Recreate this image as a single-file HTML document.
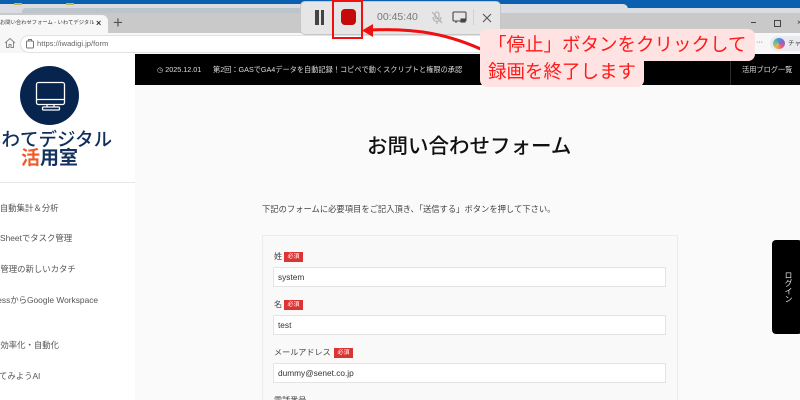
<!DOCTYPE html>
<html lang="ja"><head><meta charset="utf-8"><style>
html,body{margin:0;padding:0;overflow:hidden;width:800px;height:400px}
body{position:relative;background:#fafafa;font-family:"Liberation Sans","Noto Sans CJK JP",sans-serif;color:#333}
.a{position:absolute;white-space:nowrap}
.nav{font-size:8.4px;color:#555;line-height:12px}
.inp{position:absolute;left:273px;width:391px;height:18px;background:#fff;border:1px solid #e4e4e4;font-size:8.3px;line-height:18px;text-indent:4px;color:#333}
.lb{font-size:8.1px;color:#444;line-height:12px}
.rq{position:absolute;width:19px;height:10px;background:#dd3333;color:#fff;font-size:6px;line-height:10px;text-align:center}
</style></head><body>
<div class="a" style="left:0;top:0;width:800px;height:24px;background:#0a5fae"></div>
<div class="a" style="left:0;top:8px;width:800px;height:5px;background:#d9dde2"></div>
<div class="a" style="left:0;top:4px;width:628px;height:10px;background:#d9dde2;border-radius:0 5px 0 0"></div>
<div class="a" style="left:14px;top:3px;width:8px;height:2px;background:#c9b64a"></div>
<div class="a" style="left:66px;top:3px;width:8px;height:2px;background:#c9b64a"></div>
<div class="a" style="left:22px;top:8px;width:280px;height:6px;background:#bcc4cc;border-radius:4px 0 0 0"></div>
<div class="a" style="left:0;top:13px;width:800px;height:20px;background:#c9c9c9"></div>
<div class="a" style="left:0;top:33px;width:800px;height:20px;background:#f7f7f7"></div>
<div class="a" style="left:0;top:15px;width:108px;height:18px;background:#f7f7f7;border-radius:0 6px 0 0"></div>
<div class="a" style="left:0;top:18px;width:94px;overflow:hidden;font-size:5.3px;line-height:11px;color:#333">お問い合わせフォーム - いわてデジタル活用室</div>
<div class="a" style="left:96px;top:17px;font-size:9px;line-height:12px;color:#333;font-weight:700">×</div>
<div class="a" style="left:113px;top:13px;font-size:17px;line-height:19px;color:#555">+</div>
<svg class="a" style="left:3px;top:37px" width="14" height="12" viewBox="0 0 14 12" fill="none" stroke="#888" stroke-width="1"><path d="M2 6 7 1.500 12 6M3.500 5V10.500H6V7.500H8V10.500H10.500V5"/></svg>
<div class="a" style="left:20px;top:35px;width:490px;height:16px;background:#fff;border:1px solid #e2e2e2;border-radius:9px"></div>
<svg class="a" style="left:25px;top:38px" width="10" height="11" viewBox="0 0 10 11" fill="none" stroke="#777" stroke-width="1"><rect x="1.500" y="3" width="7" height="7" rx="1"/><path d="M3.500 3V1.500H6.500V3"/></svg>
<div class="a" style="left:37px;top:38px;font-size:7.6px;line-height:11px;color:#666">https://iwadigi.jp/form</div>
<div class="a" style="left:770px;top:36px;width:30px;height:15px;background:#e9eaee;border-radius:8px 0 0 8px"></div>
<div class="a" style="left:773px;top:38px;width:12px;height:11px;border-radius:50%;background:conic-gradient(#4a90e2,#9b59d0,#e8607a,#f2b33d,#5fc2a0,#4a90e2)"></div>
<div class="a" style="left:788px;top:39px;font-size:6.500px;line-height:9px;color:#444">チャット</div>
<div class="a" style="left:756px;top:39px;font-size:7px;line-height:8px;color:#444">···</div>
<div class="a" style="left:751px;top:22px;width:5px;height:1px;background:#444"></div>
<div class="a" style="left:774px;top:20px;width:5px;height:5px;border:1px solid #444"></div>
<div class="a" style="left:797px;top:18px;font-size:8px;line-height:9px;color:#444">×</div>

<div class="a" style="left:0;top:53px;width:135px;height:347px;background:#fff"></div>
<div class="a" style="left:135px;top:54px;width:665px;height:31px;background:#000"></div>
<div class="a" style="left:157px;top:64px;font-size:7.2px;line-height:11px;color:#ddd">◷ 2025.12.01</div>
<div class="a" style="left:213px;top:64px;font-size:7.2px;line-height:11px;color:#ddd">第2回：GASでGA4データを自動記録！コピペで動くスクリプトと権限の承認</div>
<div class="a" style="left:730px;top:54px;width:1px;height:31px;background:#2c2c2c"></div>
<div class="a" style="left:742px;top:64px;font-size:7.2px;line-height:11px;color:#ddd">活用ブログ一覧</div>

<div class="a" style="left:20px;top:66px;width:59px;height:59px;border-radius:50%;background:#07244f"></div>
<svg class="a" style="left:20px;top:66px" width="59" height="59" viewBox="0 0 59 59" fill="none" stroke="#fff" stroke-width="1.300"><rect x="16.500" y="16.500" width="28" height="22" rx="2"/><path d="M16.500 33.500H44.500M27 38.500V41M34 38.500V41"/><rect x="22.500" y="41" width="17" height="3" rx="1"/></svg>
<div class="a" style="left:-17px;top:127px;font-size:18.500px;line-height:26px;color:#0f2f5c;font-weight:500">いわてデジタル</div>
<div class="a" style="left:21px;top:148px;font-size:19px;line-height:22px;color:#14325f;font-weight:700"><span style="color:#ef5a28">活</span>用室</div>
<div class="a" style="left:0;top:182px;width:135px;height:1px;background:#e6e6e6"></div>

<div class="a nav" style="left:-8px;top:202px">AI自動集計＆分析</div>
<div class="a nav" style="left:0;top:232px">Sheetでタスク管理</div>
<div class="a nav" style="left:-8px;top:263px">案管理の新しいカタチ</div>
<div class="a nav" style="left:-31px;top:294px">WordPressからGoogle Workspace</div>
<div class="a nav" style="left:-8px;top:339px">務効率化・自動化</div>
<div class="a nav" style="left:-9px;top:370px">ってみようAI</div>

<div class="a" style="left:367px;top:133px;font-size:20.500px;line-height:28px;color:#111;font-weight:500">お問い合わせフォーム</div>
<div class="a" style="left:262px;top:203px;font-size:8.3px;line-height:12px;color:#444">下記のフォームに必要項目をご記入頂き、「送信する」ボタンを押して下さい。</div>

<div class="a" style="left:262px;top:235px;width:414px;height:170px;background:#f9f9f9;border:1px solid #ececec"></div>
<div class="a lb" style="left:274px;top:251px">姓</div><div class="rq" style="left:284px;top:252px">必須</div>
<div class="inp" style="top:267px">system</div>
<div class="a lb" style="left:274px;top:299px">名</div><div class="rq" style="left:284px;top:300px">必須</div>
<div class="inp" style="top:315px">test</div>
<div class="a lb" style="left:274px;top:347px">メールアドレス</div><div class="rq" style="left:334px;top:348px">必須</div>
<div class="inp" style="top:363px">dummy@senet.co.jp</div>
<div class="a lb" style="left:274px;top:395px">電話番号</div>

<div class="a" style="left:772px;top:240px;width:30px;height:94px;background:#000;border-radius:4px"></div>
<div class="a" style="left:783px;top:271px;font-size:8px;line-height:10px;color:#eee;writing-mode:vertical-rl">ログイン</div>

<div class="a" style="left:300px;top:1px;width:201px;height:34px;background:#e6e6e6;border:1px solid #c6c6c6;border-radius:5px;box-sizing:border-box"></div>
<div class="a" style="left:315px;top:10px;width:4px;height:15px;background:#444"></div>
<div class="a" style="left:321px;top:10px;width:3px;height:15px;background:#444"></div>
<div class="a" style="left:341px;top:9px;width:15px;height:16px;background:#c40a0a;border-radius:4px"></div>
<div class="a" style="left:332px;top:0;width:31px;height:39px;border:2.500px solid #f01010;box-sizing:border-box"></div>
<div class="a" style="left:377px;top:11px;font-size:10.500px;line-height:13px;color:#777">00:45:40</div>
<svg class="a" style="left:430px;top:10px" width="14" height="15" viewBox="0 0 14 15" fill="none" stroke="#b0b0b0" stroke-width="1.100"><rect x="5" y="2" width="4" height="7" rx="2"/><path d="M3 7C3 13 11 13 11 7M7 11.500V14M2 2 12 13"/></svg>
<svg class="a" style="left:452px;top:10px" width="16" height="15" viewBox="0 0 16 15" fill="none" stroke="#444" stroke-width="1.100"><rect x="1" y="2" width="13" height="9" rx="1"/><path d="M4 11V13"/><rect x="9" y="9" width="4" height="3" fill="#444"/></svg>
<div class="a" style="left:473px;top:9px;width:1px;height:16px;background:#d2d2d2"></div>
<svg class="a" style="left:481px;top:12px" width="12" height="12" viewBox="0 0 12 12" stroke="#555" stroke-width="1.100"><path d="M2 2 10 10M10 2 2 10"/></svg>

<svg class="a" style="left:355px;top:20px" width="135" height="40" viewBox="0 0 135 40" fill="none"><path d="M16 10C60 8 95 14 132 32" stroke="#f01010" stroke-width="3"/><path d="M7 10.500 18 4V17Z" fill="#f01010"/></svg>

<div class="a" style="left:480px;top:29px;width:275px;height:32px;background:#ffe3e3;border-radius:7px"></div>
<div class="a" style="left:480px;top:55px;width:164px;height:32px;background:#ffe3e3;border-radius:0 0 7px 7px"></div>
<div class="a" style="left:488px;top:32px;font-size:18.500px;line-height:26px;color:#ff1a1a">「停止」ボタンをクリックして</div>
<div class="a" style="left:488px;top:59px;font-size:18.500px;line-height:26px;color:#ff1a1a">録画を終了します</div>
</body></html>
